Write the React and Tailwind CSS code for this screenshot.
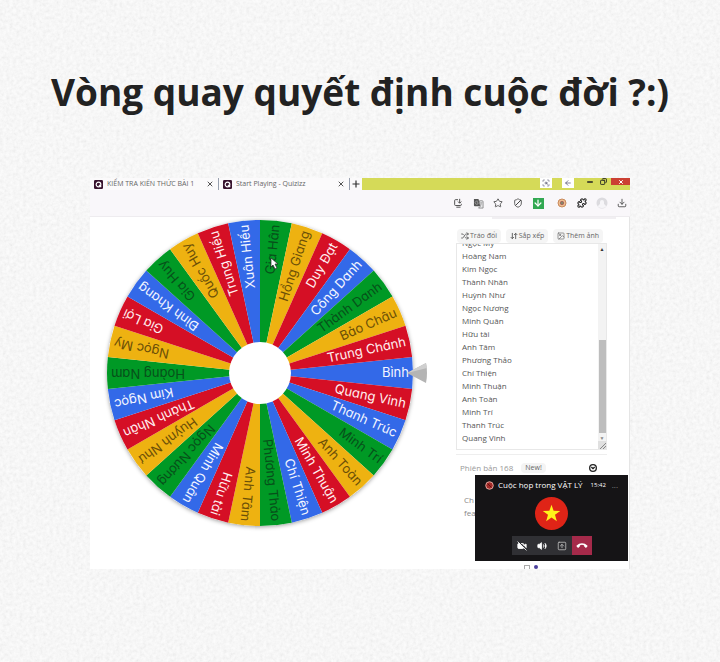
import {
  ArrowDown, ArrowDownUp, CircleChevronDown, Download,
  Image as ImageIcon, Puzzle, Shield, Shuffle,
  Star, X, Phone, SquareArrowUp, VideoOff, Volume2, ScanSearch, ArrowLeft, Minus, Copy,
} from "lucide-react";

const CX = 160;
const CY = 160;
const OUTER = 153;
const INNER = 31;

const COLORS = {
  blue: { fill: "#3369e8", text: "#f4f6ff" },
  red: { fill: "#d50f25", text: "#ffeef0" },
  yellow: { fill: "#eeb211", text: "#6b4f08" },
  green: { fill: "#009925", text: "#07501a" },
};

const ENTRIES = [
  ["Bình", "blue"], ["Quang Vinh", "red"], ["Thanh Trúc", "blue"], ["Minh Trí", "green"],
  ["Anh Toàn", "yellow"], ["Minh Thuận", "red"], ["Chí Thiện", "blue"], ["Phương Thảo", "green"],
  ["Anh Tâm", "yellow"], ["Hữu tài", "red"], ["Minh Quân", "blue"], ["Ngọc Nương", "green"],
  ["Huỳnh Như", "yellow"], ["Thành Nhân", "red"], ["Kim Ngọc", "blue"], ["Hoàng Nam", "green"],
  ["Ngọc My", "yellow"], ["Gia Lợi", "red"], ["Đình Khang", "blue"], ["Gia Huy", "green"],
  ["Quốc Huy", "yellow"], ["Trung Hiếu", "red"], ["Xuân Hiếu", "blue"], ["Gia Hân", "green"],
  ["Hồng Giang", "yellow"], ["Duy Đạt", "red"], ["Công Danh", "blue"], ["Thành Danh", "green"],
  ["Bảo Châu", "yellow"], ["Trung Chánh", "red"],
];

const LIST = [
  "Ngọc My", "Hoàng Nam", "Kim Ngọc", "Thành Nhân", "Huỳnh Như", "Ngọc Nương", "Minh Quân",
  "Hữu tài", "Anh Tâm", "Phương Thảo", "Chí Thiện", "Minh Thuận", "Anh Toàn", "Minh Trí",
  "Thanh Trúc", "Quang Vinh",
].join("\n");

function slicePath(index) {
  const step = (2 * Math.PI) / ENTRIES.length;
  const from = (index - 0.5) * step;
  const to = (index + 0.5) * step;
  const at = (a) => `${CX + OUTER * Math.cos(a)} ${CY + OUTER * Math.sin(a)}`;
  return `M${CX} ${CY} L${at(from)} A${OUTER} ${OUTER} 0 0 1 ${at(to)} Z`;
}

function Wheel() {
  const step = 360 / ENTRIES.length;
  return (
    <svg viewBox="0 0 330 320" className="h-auto w-[330px] max-w-full" role="img" aria-label="Vòng quay">
      <defs>
        <filter id="wheel-shadow" x="-10%" y="-10%" width="120%" height="120%">
          <feDropShadow dx="0" dy="1" stdDeviation="2" floodColor="#000" floodOpacity="0.4" />
        </filter>
      </defs>
      <circle cx={CX} cy={CY} r={OUTER} fill="#ffffff" filter="url(#wheel-shadow)" />
      {ENTRIES.map(([name, color], i) => (
        <path key={name} d={slicePath(i)} fill={COLORS[color].fill} />
      ))}
      <g className="font-['Inter',sans-serif] text-[13px] [font-feature-settings:'cv11','ss03']">
        {ENTRIES.map(([name, color], i) => (
          <text
            key={name}
            x={CX + 149}
            y={CY + 4}
            textAnchor="end"
            fill={COLORS[color].text}
            transform={`rotate(${i * step} ${CX} ${CY})`}
          >
            {name}
          </text>
        ))}
      </g>
      <circle cx={CX} cy={CY} r={INNER} fill="#ffffff" />
      <path d="M307 160 L326 150 Q328 160 326 170 Z" fill="#b4b4b4" />
      <path d="M307 160 L326 150 L327 155 Z" fill="#cfcfcf" />
      <path d="M171 45 v9 l2 -2 l2 4 l2 -1 l-2 -4 h3 Z" fill="#fff" stroke="#222" strokeWidth="0.7" />
    </svg>
  );
}

function TabIcon() {
  return (
    <svg viewBox="0 0 10 10" className="size-[9px] shrink-0" aria-hidden="true">
      <rect width="10" height="10" rx="1.5" fill="#38142e" />
      <circle cx="5" cy="5" r="2.6" fill="none" stroke="#fff" strokeWidth="1.3" />
      <path d="M5.5 5.5 L8 8" stroke="#fff" strokeWidth="1.3" />
    </svg>
  );
}

function Tab({ title, width }) {
  return (
    <div className={`flex h-full items-center gap-1 border-r border-gray-400 px-1 ${width}`}>
      <TabIcon />
      <span className="min-w-0 flex-1 overflow-hidden text-[7px] leading-3 whitespace-nowrap text-[#666]">{title}</span>
      <button type="button" aria-label="Đóng thẻ" className="shrink-0 pl-2"><X className="size-2 text-[#333]" strokeWidth={2.5} /></button>
    </div>
  );
}

function TabBar() {
  return (
    <div className="flex h-3 bg-[#fbfafb]">
      <Tab title="KIỂM TRA KIẾN THỨC BÀI 1" width="w-[129px]" />
      <Tab title="Start Playing - Quizizz" width="w-[131px]" />
      <button type="button" aria-label="Thẻ mới" className="px-px"><Plus2 /></button>
      <div className="flex flex-1 items-start justify-end bg-[#d5da58]">
        <span className="mr-2.5 flex h-2.5 w-3 items-center justify-center bg-white"><ScanSearch className="size-2 text-[#555570]" /></span>
        <span className="mr-3 flex h-2.5 w-3 items-center justify-center bg-white"><ArrowLeft className="size-2 text-[#444466]" /></span>
        <button type="button" aria-label="Thu nhỏ" className="mr-2 w-1.5"><Minus className="size-2 text-[#222]" strokeWidth={4} /></button>
        <button type="button" aria-label="Phóng to" className="mr-1"><Copy className="size-[7px] -scale-x-100 text-[#222]" strokeWidth={3} /></button>
        <button type="button" aria-label="Đóng" className="flex h-[7px] w-[19px] items-center justify-center bg-[#cb4033]"><X className="size-1.5 text-white" strokeWidth={4} /></button>
      </div>
    </div>
  );
}

function Plus2() {
  return (
    <svg viewBox="0 0 10 10" className="size-2.5" aria-hidden="true">
      <path d="M5 1.5 V8.5 M1.5 5 H8.5" stroke="#333" strokeWidth="1.2" />
    </svg>
  );
}

function ShareIcon() {
  return (
    <svg viewBox="0 0 12 12" className="size-2.5" fill="none" stroke="#444" strokeWidth="1.1" aria-hidden="true">
      <path d="M6 2 H3 Q2 2 2 3 V8 Q2 9 3 9 H9 Q10 9 10 8 V7 M4 11 H9 M8 1 V6 M6 4.3 L8 6.3 L10 4.3" />
    </svg>
  );
}

function TranslateIcon() {
  return (
    <svg viewBox="0 0 12 12" className="size-[11px]" aria-hidden="true">
      <path d="M1 1 H6 L8 9 H2 Q1 9 1 8 Z" fill="#555" />
      <path d="M7 3 H10 Q11 3 11 4 V11 H6 L8 9 Z" fill="#e8e8ea" stroke="#777" strokeWidth="0.8" />
      <path d="M5.6 4 A1.8 1.8 0 1 0 5.6 6.2 V5.2 H4.2 M8 5 H10.5 M9.2 5 Q9.5 7 8.3 8.5" fill="none" stroke="#aaa" strokeWidth="0.8" />
    </svg>
  );
}

function BlockIcon() {
  return (
    <span className="relative flex">
      <Shield className="size-2.5 text-[#444]" />
      <svg viewBox="0 0 10 10" className="absolute inset-0 size-2.5" aria-hidden="true">
        <path d="M2.5 7.5 L8 2" stroke="#444" />
      </svg>
    </span>
  );
}

function CookieIcon() {
  return (
    <svg viewBox="0 0 10 10" className="size-2.5" aria-hidden="true">
      <circle cx="5" cy="5" r="4" fill="#edbd91" stroke="#c98a5c" />
      <circle cx="5" cy="5" r="2" fill="#9a5a55" />
      <circle cx="5" cy="5" r="0.8" fill="#63c08a" />
    </svg>
  );
}

function AvatarIcon() {
  return (
    <svg viewBox="0 0 12 12" className="size-3" aria-hidden="true">
      <circle cx="6" cy="6" r="5.5" fill="#dcdbdf" />
      <path d="M6 3 a2 2 0 0 1 2 2 v2 q2 1 2 3 q-4 2 -8 0 q0 -2 2 -3 v-2 a2 2 0 0 1 2 -2 Z" fill="#f6f5f8" />
    </svg>
  );
}

function Toolbar() {
  const small = "size-2.5 text-[#444]";
  const items = [
    ["Gửi", <ShareIcon />],
    ["Dịch", <TranslateIcon />],
    ["Đánh dấu", <Star className={small} />],
    ["Chặn", <BlockIcon />],
    ["Tải trang", <span className="flex size-[11px] items-center justify-center bg-[#32a852]"><ArrowDown className="size-2.5 text-white" strokeWidth={3} /></span>],
    null,
    ["Cookie", <CookieIcon />],
    ["Tiện ích", <Puzzle className="size-2.5 text-[#222]" strokeWidth={2.5} />],
    ["Hồ sơ", <AvatarIcon />],
    ["Tải xuống", <Download className={small} />],
  ];
  return (
    <div className="flex h-[27px] items-center justify-end gap-2 border-b border-[#eeecef] bg-[#f9f7fa] pr-0.5">
      {items.map((item) =>
        item ? (
          <button key={item[0]} type="button" aria-label={item[0]} className="flex size-3 items-center justify-center">{item[1]}</button>
        ) : (
          <span key="divider" className="-mx-0.5" />
        )
      )}
    </div>
  );
}

function ToolButton({ icon, children }) {
  return (
    <button type="button" className="flex h-3.5 items-center gap-px rounded-sm bg-[#f5f5f5] px-1 text-[7px] whitespace-nowrap text-[#666]">
      {icon}
      {children}
    </button>
  );
}

function NameList() {
  return (
    <div className="flex h-[207px] border border-[#e8e8e8]">
      <div className="min-w-0 flex-1 overflow-hidden">
        <textarea
          aria-label="Danh sách tên"
          readOnly
          rows={16}
          value={LIST}
          className="-mt-2 block w-full resize-none overflow-hidden pl-[5px] text-[8px] leading-[13px] text-[#555] outline-none"
        />
      </div>
      <div className="flex w-2 flex-col items-center bg-[#f3f3f3]">
        <span className="pt-0.5 text-[5px] leading-[6px] text-[#333]">▲</span>
        <div className="mt-[88px] w-[7px] flex-1 bg-[#bdbdbd]" />
        <span className="pt-0.5 text-[5px] leading-[6px] text-[#888]">▼</span>
        <svg viewBox="0 0 8 8" className="size-2" aria-hidden="true">
          <rect width="8" height="8" fill="#e0e0e0" />
          <path d="M2 8 L8 2 M5 8 L8 5" stroke="#888" />
        </svg>
      </div>
    </div>
  );
}

function SidePanel() {
  return (
    <aside className="w-[151px] shrink-0">
      <div className="mb-2.5 ml-9 h-0.5 w-[124px] bg-[#f1eff2]" />
      <div className="flex justify-between pr-1 pl-px">
        <ToolButton icon={<Shuffle className="size-2" strokeWidth={3} />}>Tráo đổi</ToolButton>
        <ToolButton icon={<ArrowDownUp className="size-2" strokeWidth={3} />}>Sắp xếp</ToolButton>
        <ToolButton icon={<ImageIcon className="size-2" strokeWidth={2} />}>Thêm ảnh</ToolButton>
      </div>
      <NameList />
      <div className="mt-1 flex items-center border-t border-[#eee] pt-1.5 pl-1 text-[8px] leading-3.5 text-[#999]">
        <span>Phiên bản 168</span>
        <span className="ml-2 rounded-sm bg-[#f4f4f4] px-1 text-[7px] leading-2.5 text-[#666]">New!</span>
        <CircleChevronDown className="mr-2.5 ml-auto size-2 text-[#222]" strokeWidth={4} />
      </div>
      <p className="mt-[18px] w-5 pl-2 text-[8px] leading-[13px] text-[#888]">Ch fea</p>
    </aside>
  );
}

function CallWindow() {
  const control = "flex h-[19px] w-5 items-center justify-center";
  return (
    <section aria-label="Cuộc họp" className="absolute right-0.5 bottom-2 flex h-[86px] w-[153px] flex-col items-center bg-[#151416] text-white">
      <header className="flex w-full items-center px-2.5 pt-1 text-[8px] leading-3 whitespace-nowrap">
        <svg viewBox="0 0 10 10" className="mr-1 size-[9px]" aria-hidden="true">
          <circle cx="5" cy="5" r="4.2" fill="#a32a28" stroke="#f0b5ad" />
          <path d="M3 3 L7 7" stroke="#5a0f0f" />
        </svg>
        <span>Cuộc họp trong VẬT LÝ</span>
        <span className="ml-2 text-[6px]">15:42</span>
        <span className="ml-auto text-[#888]">...</span>
      </header>
      <svg viewBox="0 0 34 34" className="mt-1.5 size-[33px]" role="img" aria-label="Cờ Việt Nam">
        <circle cx="17" cy="17" r="17" fill="#df2417" />
        <path d="M17 8 L19.2 14.2 L26 14.4 L20.6 18.4 L22.5 25 L17 21.1 L11.5 25 L13.4 18.4 L8 14.4 L14.8 14.2 Z" fill="#fff21a" />
      </svg>
      <div className="mt-1.5 flex bg-[#303034]">
        <button type="button" aria-label="Máy ảnh" className={control}><VideoOff className="size-2.5 fill-white" /></button>
        <button type="button" aria-label="Âm thanh" className={control}><Volume2 className="size-2.5 fill-white" /></button>
        <button type="button" aria-label="Chia sẻ màn hình" className={control}><SquareArrowUp className="size-2.5 text-[#bbb]" /></button>
        <button type="button" aria-label="Kết thúc" className={`${control} bg-[#a52a4a]`}><Phone className="size-2.5 rotate-[135deg] fill-white stroke-none" /></button>
      </div>
    </section>
  );
}

function Paper() {
  return (
    <svg className="absolute inset-0 -z-10 size-full" aria-hidden="true">
      <filter id="paper">
        <feTurbulence type="fractalNoise" baseFrequency="0.3" numOctaves="3" seed="4" />
        <feColorMatrix values="0.11 0 0 0 0.885  0.11 0 0 0 0.885  0.11 0 0 0 0.885  0 0 0 0 1" colorInterpolationFilters="sRGB" />
      </filter>
      <rect width="100%" height="100%" filter="url(#paper)" />
    </svg>
  );
}

export default function App() {
  return (
    <div className="relative isolate min-h-screen bg-[#efefef] pt-[62px] font-['Open_Sans','Noto_Sans',sans-serif]">
      <Paper />
      <h1 className="text-center text-[37px] leading-[60px] font-bold text-[#222]">Vòng quay quyết định cuộc đời ?:)</h1>
      <main className="relative mx-auto mt-14 w-3/4 min-w-[540px] bg-white">
        <TabBar />
        <Toolbar />
        <div className="flex h-[352px] justify-between border-r border-[#e5e5e5] pr-[22px] pl-2.5">
          <div className="-mt-1"><Wheel /></div>
          <SidePanel />
        </div>
        <CallWindow />
        <div className="absolute right-[92px] bottom-0 flex items-center gap-1">
          <span className="h-1 w-1.5 border border-b-0 border-[#aaa]" />
          <span className="size-1 rounded-full bg-[#4b3f9c]" />
        </div>
      </main>
    </div>
  );
}
